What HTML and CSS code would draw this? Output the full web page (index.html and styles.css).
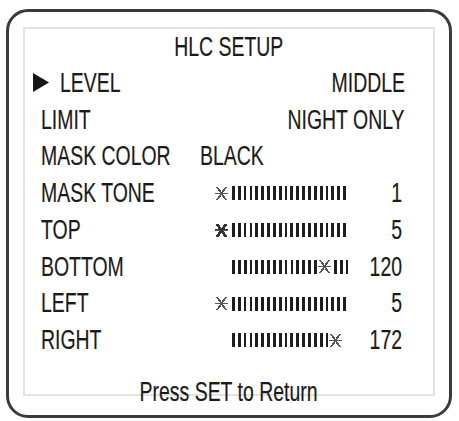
FILE: index.html
```html
<!DOCTYPE html>
<html lang="en">
  <head>
    <meta charset="UTF-8" />
    <meta name="viewport" content="width=device-width, initial-scale=1.0" />
    <title>HLC Setup</title>

    <link rel="stylesheet" href="styles.css">
  </head>

  <body>
    <!-- OSD frame -->
    <div class="monitor">
      <div class="screen">
        <h1 class="title"><span class="cond mid">HLC SETUP</span></h1>

        <ul class="menu">
          <li class="row">
            <span class="label">
              <svg class="cursor" width="16" height="19" viewBox="0 0 16 19">
                <polygon points="0,0 16,9.5 0,19" fill="#161616" />
              </svg>
              <span class="cond">LEVEL</span>
            </span>
            <span class="value text"><span class="cond end">MIDDLE</span></span>
          </li>

          <li class="row">
            <span class="label"><span class="cond">LIMIT</span></span>
            <span class="value text"><span class="cond end">NIGHT ONLY</span></span>
          </li>

          <li class="row">
            <span class="label"><span class="cond">MASK COLOR</span></span>
            <span class="option"><span class="cond">BLACK</span></span>
          </li>

          <li class="row">
            <span class="label"><span class="cond">MASK TONE</span></span>
            <span class="slider">
              <i class="star lead"></i>
              <span class="ticks" style="--n: 20"></span>
            </span>
            <span class="value"><span class="cond end">1</span></span>
          </li>

          <li class="row">
            <span class="label"><span class="cond">TOP</span></span>
            <span class="slider">
              <i class="star lead bold"></i>
              <span class="ticks" style="--n: 20"></span>
            </span>
            <span class="value"><span class="cond end">5</span></span>
          </li>

          <li class="row">
            <span class="label"><span class="cond">BOTTOM</span></span>
            <span class="slider">
              <span class="ticks" style="--n: 15"></span>
              <i class="star"></i>
              <span class="ticks" style="--n: 3"></span>
            </span>
            <span class="value"><span class="cond end">120</span></span>
          </li>

          <li class="row">
            <span class="label"><span class="cond">LEFT</span></span>
            <span class="slider">
              <i class="star lead"></i>
              <span class="ticks" style="--n: 20"></span>
            </span>
            <span class="value"><span class="cond end">5</span></span>
          </li>

          <li class="row">
            <span class="label"><span class="cond">RIGHT</span></span>
            <span class="slider">
              <span class="ticks" style="--n: 17"></span>
              <i class="star"></i>
            </span>
            <span class="value"><span class="cond end">172</span></span>
          </li>
        </ul>

        <p class="hint"><span class="cond mid">Press SET to Return</span></p>
      </div>
    </div>
  </body>
</html>
```

FILE: styles.css
```css
* {
  margin: 0;
  padding: 0;
  box-sizing: border-box;
}

body {
  font-family: "Liberation Sans", Arial, sans-serif;
  font-size: 27px;
  color: #1b1b1b;
  background: #fff;
}

/* outer rounded frame */
.monitor {
  width: 446px;
  height: 409px;
  margin: 9px 0 0 6px;
  padding: 15px 0 0 14px;
  border: 3px solid #3b3b3b;
  border-radius: 22px;
}

/* inner light panel */
.screen {
  width: 412px;
  height: 369px;
  padding: 0 31px 0 16px;
  border: 2px solid #e3e3e3;
  display: flex;
  flex-direction: column;
}

/* condensed lettering */
.cond {
  display: inline-block;
  white-space: nowrap;
  transform: scaleX(0.72);
  transform-origin: left center;
  -webkit-text-stroke: 0.2px #1b1b1b;
}

.cond.end {
  transform-origin: right center;
}

.cond.mid {
  transform-origin: center center;
}

.title {
  font-size: 27px;
  font-weight: normal;
  line-height: 36px;
  text-align: center;
  margin-right: -15px;
}

.menu {
  list-style: none;
}

.row {
  display: grid;
  grid-template-columns: 191px 1fr auto;
  align-items: center;
  line-height: 36.7px;
}

.label {
  display: flex;
  align-items: center;
}

.cursor {
  margin-left: -8px;
  margin-right: 11px;
  margin-top: -1px;
}

.value {
  grid-column: 3;
  text-align: right;
}

.value.text {
  margin-right: -3px;
}

.option {
  grid-column: 2 / 4;
  margin-left: -32px;
}

/* slider track */
.slider {
  display: flex;
  align-items: center;
  height: 14px;
}

.ticks {
  display: block;
  height: 14px;
  width: calc(var(--n) * 5.85px - 3.05px);
  background: repeating-linear-gradient(
    90deg,
    #1e1e1e 0 2.8px,
    transparent 2.8px 5.85px
  );
}

.star {
  display: block;
  width: 13px;
  height: 13px;
  margin: 0 3px 0 1px;
  background:
    linear-gradient(#555, #555) center / 13px 1.3px no-repeat,
    linear-gradient(55deg, transparent 45%, #555 45% 55%, transparent 55%),
    linear-gradient(-55deg, transparent 45%, #555 45% 55%, transparent 55%);
}

.star.lead {
  margin-left: -17px;
  margin-right: 4px;
}

.star.bold {
  background:
    linear-gradient(#333, #333) center / 13px 1.8px no-repeat,
    linear-gradient(55deg, transparent 42%, #333 42% 58%, transparent 58%),
    linear-gradient(-55deg, transparent 42%, #333 42% 58%, transparent 58%);
}

.hint {
  margin-top: 15px;
  line-height: 36.7px;
  text-align: center;
  margin-right: -15px;
}
```
